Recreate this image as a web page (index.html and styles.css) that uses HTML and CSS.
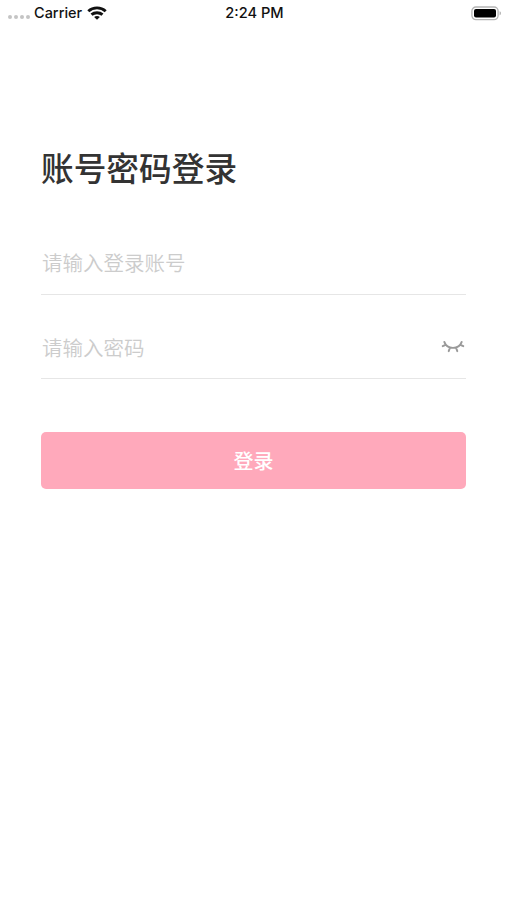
FILE: index.html
```html
<!DOCTYPE html>
<html lang="zh-CN">
<head>
<meta charset="utf-8">
<title>账号密码登录</title>
<link rel="stylesheet" href="styles.css">
</head>
<body>
<header class="status">
  <div class="status-left">
    <span class="dots"><i></i><i></i><i></i><i></i></span>
    <span class="carrier">Carrier</span>
    <svg class="wifi" width="20" height="14" viewBox="0 0 20 14" fill="none" stroke="#111" stroke-width="2.9">
      <path d="M1.300 5.200C6.100.8 13.900.8 18.700 5.200"/>
      <path d="M4.500 8.700c3.100-2.700 7.900-2.700 11 0"/>
      <path d="M7.100 11c1.600-1.300 4.200-1.300 5.800 0L10 13.800z" fill="#111" stroke="none"/>
    </svg>
  </div>
  <time class="clock">2:24 PM</time>
  <div class="status-right">
    <svg width="31" height="15" viewBox="0 0 31 15">
      <rect x=".9" y="1" width="26.200" height="12.600" rx="4" fill="#fff" stroke="#b4b4b4" stroke-width="1.300"/>
      <rect x="3" y="3" width="22" height="8.600" rx="2" fill="#000"/>
      <path d="M28.600 5.300c1.700.5 1.700 3.500 0 4z" fill="#aaa"/>
    </svg>
  </div>
</header>
<main class="login">
  <h1 class="title">账号密码登录</h1>
  <label class="field"><span class="hint">请输入登录账号</span></label>
  <label class="field field-password"><span class="hint">请输入密码</span>
    <svg class="eye" width="24" height="14" viewBox="0 0 24 14" fill="none" stroke="#999" stroke-width="1.900" stroke-linecap="round">
      <path d="M3.300 1.900C6 9.900 18 9.900 20.700 1.900M4.600 4.800 1.700 6.200M9 7.700 7.700 11.200M15 7.700l1.300 3.500M19.400 4.800l2.900 1.400"/>
    </svg>
  </label>
  <button class="submit" type="button">登录</button>
</main>
</body>
</html>
```
FILE: styles.css
```css
* { box-sizing: border-box; }
body {
  margin: 0;
  min-height: 900px;
  background: #fff;
  color: #333;
  font-family: "Noto Sans CJK SC", sans-serif;
}
.status {
  display: grid;
  grid-template-columns: 1fr auto 1fr;
  align-items: center;
  height: 26px;
  padding: 0 6px 0 8px;
  color: #111;
  font: 500 14.5px/26px Inter, sans-serif;
}
.status-left { display: flex; align-items: center; }
.dots { display: flex; gap: 2px; margin: 8px 4px 0 0; }
.dots i { width: 4px; height: 4px; border-radius: 50%; background: #c4c4c4; }
.wifi { margin-left: 5px; }
.clock { font-size: 14.6px; }
.status-right { display: flex; justify-content: flex-end; margin-right: -1px; }
.login { padding: 117px 41px 0; }
.title {
  margin: 0;
  font-size: 32.7px;
  font-weight: 500;
  line-height: 48px;
}
.field {
  display: flex;
  align-items: center;
  justify-content: space-between;
  height: 65px;
  margin-top: 39px;
  border-bottom: 1px solid #e6e6e6;
}
.field-password { height: 64px; margin-top: 20px; }
.hint { padding-left: 1px; color: #ccc; font-size: 20.5px; font-weight: 350; line-height: 30px; }
.eye { margin-right: 1px; }
.submit {
  display: block;
  width: 100%;
  height: 57px;
  margin-top: 53px;
  padding: 0;
  border: 0;
  border-radius: 5px;
  background: #ffa9bb;
  color: #fff;
  font: 500 20px/57px "Noto Sans CJK SC", sans-serif;
}
```
